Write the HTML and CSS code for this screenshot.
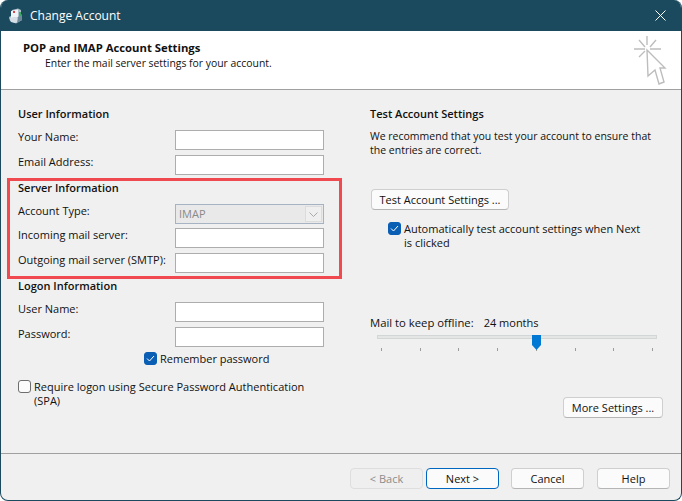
FILE: index.html
```html
<!DOCTYPE html>
<html lang="en">
<head>
    <meta charset="UTF-8">
    <title>Change Account</title>
    <link rel="stylesheet" href="styles.css">
</head>
<body>
    <div class="window">
        <div class="titlebar">
            <svg class="app-icon" width="16" height="16" viewBox="0 0 16 16">
                <path d="M4 2 L10 0.5 L13 2 L13 8 L14 12 L8 15.5 L2 13 L1 9 L3 8 Z" fill="#aebfca"/>
                <path d="M3 3 L10 1.5 L10 9 L3 10 Z" fill="#eef3f6"/>
                <path d="M1.5 10 L9 9 L11 13 L7 15 L3 14 Z" fill="#d5dee4"/>
                <path d="M10 9 L14 6 L14 12 L9 15 Z" fill="#6f8998"/>
                <rect x="5" y="3" width="2" height="2" fill="#d8454a"/>
                <rect x="11" y="4" width="2" height="4" fill="#3fa862"/>
            </svg>
            <span class="title">Change Account</span>
            <svg class="close" width="11" height="11" viewBox="0 0 11 11">
                <path d="M0.5 0.5 L10.5 10.5 M10.5 0.5 L0.5 10.5" stroke="#fff" stroke-width="1" fill="none"/>
            </svg>
        </div>
        <div class="header">
            <div>
                <h1>POP and IMAP Account Settings</h1>
                <p>Enter the mail server settings for your account.</p>
            </div>
            <svg class="cursor-icon" width="36" height="52" viewBox="632 34 36 52">
                <g stroke="#bdbdbd" stroke-width="1.4" fill="none">
                    <path d="M647 36 V45 M634 49 H645 M650 49 H661 M639 40 L645 47 M656 40 L650 47 M639 57 L645 51"/>
                    <path d="M647 50 L665 68 L660 68 L664 82 L659 84 L655 70 L648 76 Z" fill="#fff"/>
                </g>
            </svg>
        </div>
        <div class="content">
            <div class="left">
                <h2>User Information</h2>
                <div class="row"><label>Your Name:</label><div class="field"></div></div>
                <div class="row"><label>Email Address:</label><div class="field"></div></div>
                <h2 class="group">Server Information</h2>
                <div class="row tight">
                    <label>Account Type:</label>
                    <div class="field select"><span>IMAP</span>
                        <div class="arrow"><svg width="9" height="5" viewBox="0 0 9 5"><path d="M0.5 0.5 L4.5 4.5 L8.5 0.5" stroke="#a9a9a9" fill="none"/></svg></div>
                    </div>
                </div>
                <div class="row"><label>Incoming mail server:</label><div class="field"></div></div>
                <div class="row"><label>Outgoing mail server (SMTP):</label><div class="field"></div></div>
                <h2 class="group">Logon Information</h2>
                <div class="row"><label>User Name:</label><div class="field"></div></div>
                <div class="row"><label>Password:</label><div class="field"></div></div>
                <div class="check remember">
                    <span class="box on"><svg width="9" height="7" viewBox="0 0 9 7"><path d="M1 3.5 L3.5 6 L8 1" stroke="#fff" fill="none"/></svg></span>
                    <span>Remember password</span>
                </div>
                <div class="check spa">
                    <span class="box"></span>
                    <span>Require logon using Secure Password Authentication (SPA)</span>
                </div>
                <div class="callout"></div>
            </div>
            <div class="right">
                <h2>Test Account Settings</h2>
                <p class="intro">We recommend that you test your account to ensure that the entries are correct.</p>
                <button class="btn test-btn">Test Account Settings ...</button>
                <div class="check auto">
                    <span class="box on"><svg width="9" height="7" viewBox="0 0 9 7"><path d="M1 3.5 L3.5 6 L8 1" stroke="#fff" fill="none"/></svg></span>
                    <span>Automatically test account settings when Next is clicked</span>
                </div>
                <div class="offline"><span class="offline-label">Mail to keep offline:</span><span>24 months</span></div>
                <div class="slider">
                    <div class="track"></div>
                    <svg class="thumb" width="9" height="15" viewBox="0 0 9 15"><path d="M0 0 H9 V10 L4.5 15 L0 10 Z" fill="#0078d4"/></svg>
                    <div class="ticks"><i></i><i></i><i></i><i></i><i></i><i></i><i></i><i></i></div>
                </div>
                <div class="more"><button class="btn more-btn">More Settings ...</button></div>
            </div>
        </div>
        <div class="footer">
            <button class="btn back" disabled>&lt; Back</button>
            <button class="btn next">Next &gt;</button>
            <button class="btn cancel">Cancel</button>
            <button class="btn help">Help</button>
        </div>
    </div>
</body>
</html>
```

FILE: styles.css
```css
* {
    box-sizing: border-box;
}
html, body {
    margin: 0;
    height: 100%;
    background: #fff;
}
body {
    font-family: "Open Sans", "Noto Sans", sans-serif;
    font-size: 11px;
    line-height: 14px;
    color: #111;
}
.window {
    height: 501px;
    display: flex;
    flex-direction: column;
    background: #f0f0f0;
    border: 1px solid #1b4a5f;
    border-top: 0;
    border-radius: 8px;
    overflow: hidden;
}
.titlebar {
    height: 31px;
    flex: none;
    margin: 0 -1px;
    padding: 0 16px 0 8px;
    display: flex;
    align-items: center;
    background: #1b4a5f;
    color: #fff;
}
.title {
    margin-left: 6px;
    font-size: 12px;
}
.close {
    margin-left: auto;
}
.header {
    height: 59px;
    flex: none;
    padding: 9px 13px 0 22px;
    display: flex;
    justify-content: space-between;
    background: #fff;
    border-bottom: 1px solid #a0a0a0;
}
.header h1 {
    margin: 0;
    font-size: 11.3px;
    line-height: 16px;
    font-weight: 700;
}
.header p {
    margin: 0 0 0 22px;
    font-size: 10.4px;
    line-height: 15px;
}
.cursor-icon {
    margin-top: -6px;
}
.content {
    flex: 1;
    display: flex;
    border-bottom: 1px solid #a0a0a0;
}
h2 {
    margin: 0;
    font-size: 11px;
    line-height: 16px;
    font-weight: 600;
}
.left {
    position: relative;
    width: 369px;
    padding: 16px 0 0 17px;
}
.left h2:first-child {
    margin-bottom: 8px;
}
.row {
    display: flex;
    margin-bottom: 5px;
}
.row.tight {
    margin-bottom: 4px;
}
.row label {
    width: 157px;
}
h2.group {
    margin-bottom: 8px;
}
.field {
    width: 149px;
    height: 20px;
    background: #fff;
    border: 1px solid #adadad;
}
.select {
    display: flex;
    justify-content: space-between;
    padding: 2px 1px 1px 3px;
    background: #e9e9e9;
    border: 1px solid #a6b3c2;
    color: #8a8a8a;
}
.arrow {
    width: 17px;
    margin-top: -1px;
    display: flex;
    align-items: center;
    justify-content: center;
    background: #efefef;
    border: 1px solid #dcdcdc;
}
.check {
    display: flex;
    column-gap: 3px;
}
.box {
    flex: none;
    width: 13px;
    height: 13px;
    display: flex;
    align-items: center;
    justify-content: center;
    background: #fbfbfb;
    border: 1px solid #6e6e6e;
    border-radius: 3px;
}
.box.on {
    background: #0a5fb4;
    border-color: #0a5fb4;
}
.remember {
    margin: 1px 0 0 126px;
}
.spa {
    margin: 14px 50px 0 0;
}
.callout {
    position: absolute;
    left: 6px;
    top: 88px;
    width: 335px;
    height: 101px;
    border: 3px solid #f04a50;
}
.right {
    flex: 1;
    padding: 16px 18px 0 0;
}
.right h2 {
    margin-bottom: 7px;
}
.intro {
    margin: 0;
    width: 290px;
    font-size: 10.5px;
}
.btn {
    height: 21px;
    padding: 0;
    font: inherit;
    color: #111;
    background: #fbfbfb;
    border: 1px solid #cfcfcf;
    border-bottom-color: #b5b5b5;
    border-radius: 4px;
}
.test-btn {
    display: block;
    width: 138px;
    margin: 32px 0 0 1px;
}
.auto {
    margin: 12px 0 0 18px;
    width: 258px;
}
.offline {
    margin-top: 66px;
    display: flex;
    column-gap: 10px;
}
.offline-label {
    font-size: 11.3px;
}
.slider {
    position: relative;
    margin: 5px 0 0 7px;
    width: 280px;
    height: 26px;
}
.track {
    height: 4px;
    margin-top: 4px;
    background: #e4e6e6;
    border: 1px solid #d3d6d6;
}
.thumb {
    position: absolute;
    left: 155px;
    top: 0;
}
.ticks {
    margin: 9px 4px 0;
    display: flex;
    justify-content: space-between;
}
.ticks i {
    width: 1px;
    height: 3px;
    background: #9c9c9c;
}
.more {
    margin-top: 36px;
    padding-left: 193px;
}
.more-btn {
    width: 100px;
}
.footer {
    height: 46px;
    flex: none;
    padding: 14px 11px 0 0;
    display: flex;
    justify-content: flex-end;
}
.footer .btn {
    width: 73px;
}
.back {
    margin-right: 3px;
    color: #8c8c8c;
    background: #efefef;
    border-color: #dedede;
}
.footer .back {
    border-bottom-color: #dedede;
}
.next {
    margin-right: 12px;
    border: 1px solid #0067c0;
    border-bottom-color: #0067c0;
}
.cancel {
    margin-right: 13px;
}
```
